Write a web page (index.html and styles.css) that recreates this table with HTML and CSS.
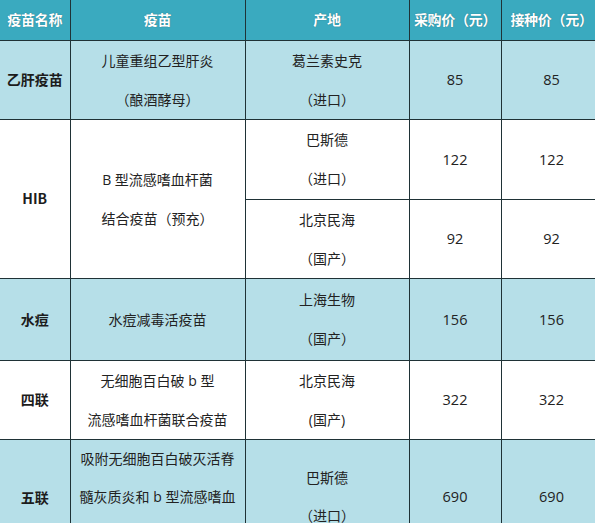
FILE: index.html
```html
<!DOCTYPE html>
<html lang="zh-CN">
<head>
<meta charset="utf-8">
<link rel="stylesheet" href="styles.css">
</head>
<body>
<table class="vt">
  <colgroup>
    <col class="c1"><col class="c2"><col class="c3"><col class="c4"><col class="c5">
  </colgroup>
  <thead>
    <tr class="hd">
      <th>疫苗名称</th>
      <th>疫苗</th>
      <th>产地</th>
      <th>采购价（元）</th>
      <th>接种价（元）</th>
    </tr>
  </thead>
  <tbody>
    <tr class="r1 blue">
      <td class="name">乙肝疫苗</td>
      <td>儿童重组乙型肝炎<br>（酿酒酵母）</td>
      <td>葛兰素史克<br>（进口）</td>
      <td class="num">85</td>
      <td class="num">85</td>
    </tr>
    <tr class="r2a">
      <td class="name" rowspan="2">HIB</td>
      <td rowspan="2">B 型流感嗜血杆菌<br>结合疫苗（预充）</td>
      <td>巴斯德<br>（进口）</td>
      <td class="num">122</td>
      <td class="num">122</td>
    </tr>
    <tr class="r2b">
      <td>北京民海<br>（国产）</td>
      <td class="num">92</td>
      <td class="num">92</td>
    </tr>
    <tr class="r3 blue">
      <td class="name">水痘</td>
      <td>水痘减毒活疫苗</td>
      <td>上海生物<br>（国产）</td>
      <td class="num">156</td>
      <td class="num">156</td>
    </tr>
    <tr class="r4">
      <td class="name">四联</td>
      <td>无细胞百白破 b 型<br>流感嗜血杆菌联合疫苗</td>
      <td>北京民海<br>(国产)</td>
      <td class="num">322</td>
      <td class="num">322</td>
    </tr>
    <tr class="r5 blue">
      <td class="name">五联</td>
      <td>吸附无细胞百白破灭活脊<br>髓灰质炎和 b 型流感嗜血<br>杆菌联合疫苗</td>
      <td>巴斯德<br>（进口）</td>
      <td class="num">690</td>
      <td class="num">690</td>
    </tr>
  </tbody>
</table>
</body>
</html>
```

FILE: styles.css
```css
html, body {
  margin: 0;
  padding: 0;
  background: #ffffff;
  overflow: hidden;
}

.vt {
  border-collapse: collapse;
  table-layout: fixed;
  width: 602px;
  font-family: "Open Sans", "Noto Sans CJK SC", sans-serif;
  font-size: 14px;
  color: #222222;
}

.c1 { width: 70px; }
.c2 { width: 175px; }
.c3 { width: 164px; }
.c4 { width: 92px; }
.c5 { width: 101px; }

.vt th,
.vt td {
  border: 1.5px solid #1f3236;
  padding: 0;
  text-align: center;
  vertical-align: middle;
  white-space: nowrap;
  line-height: 39px;
}

.vt tr > :first-child {
  border-left: none;
}

.vt thead th {
  border-top: none;
}

.hd {
  height: 40px;
  background: #3aaabf;
}

.hd th {
  color: #ffffff;
  font-family: "Noto Sans CJK SC", sans-serif;
  font-weight: 700;
  font-size: 14px;
  letter-spacing: -0.3px;
  text-shadow: 0 0 1px rgba(20, 60, 70, 0.6);
}

.blue {
  background: #b6dfe8;
}

.r1 { height: 79px; }
.r2a { height: 80px; }
.r2b { height: 73px; }
.r3 { height: 82px; }
.r4 { height: 78px; }
.r5 { height: 114px; }

.r5 td {
  line-height: 38px;
}

.name {
  font-family: "Noto Sans CJK SC", sans-serif;
  font-weight: 700;
  color: #1c1c1c;
}

.num {
  font-size: 14.5px;
}
```
